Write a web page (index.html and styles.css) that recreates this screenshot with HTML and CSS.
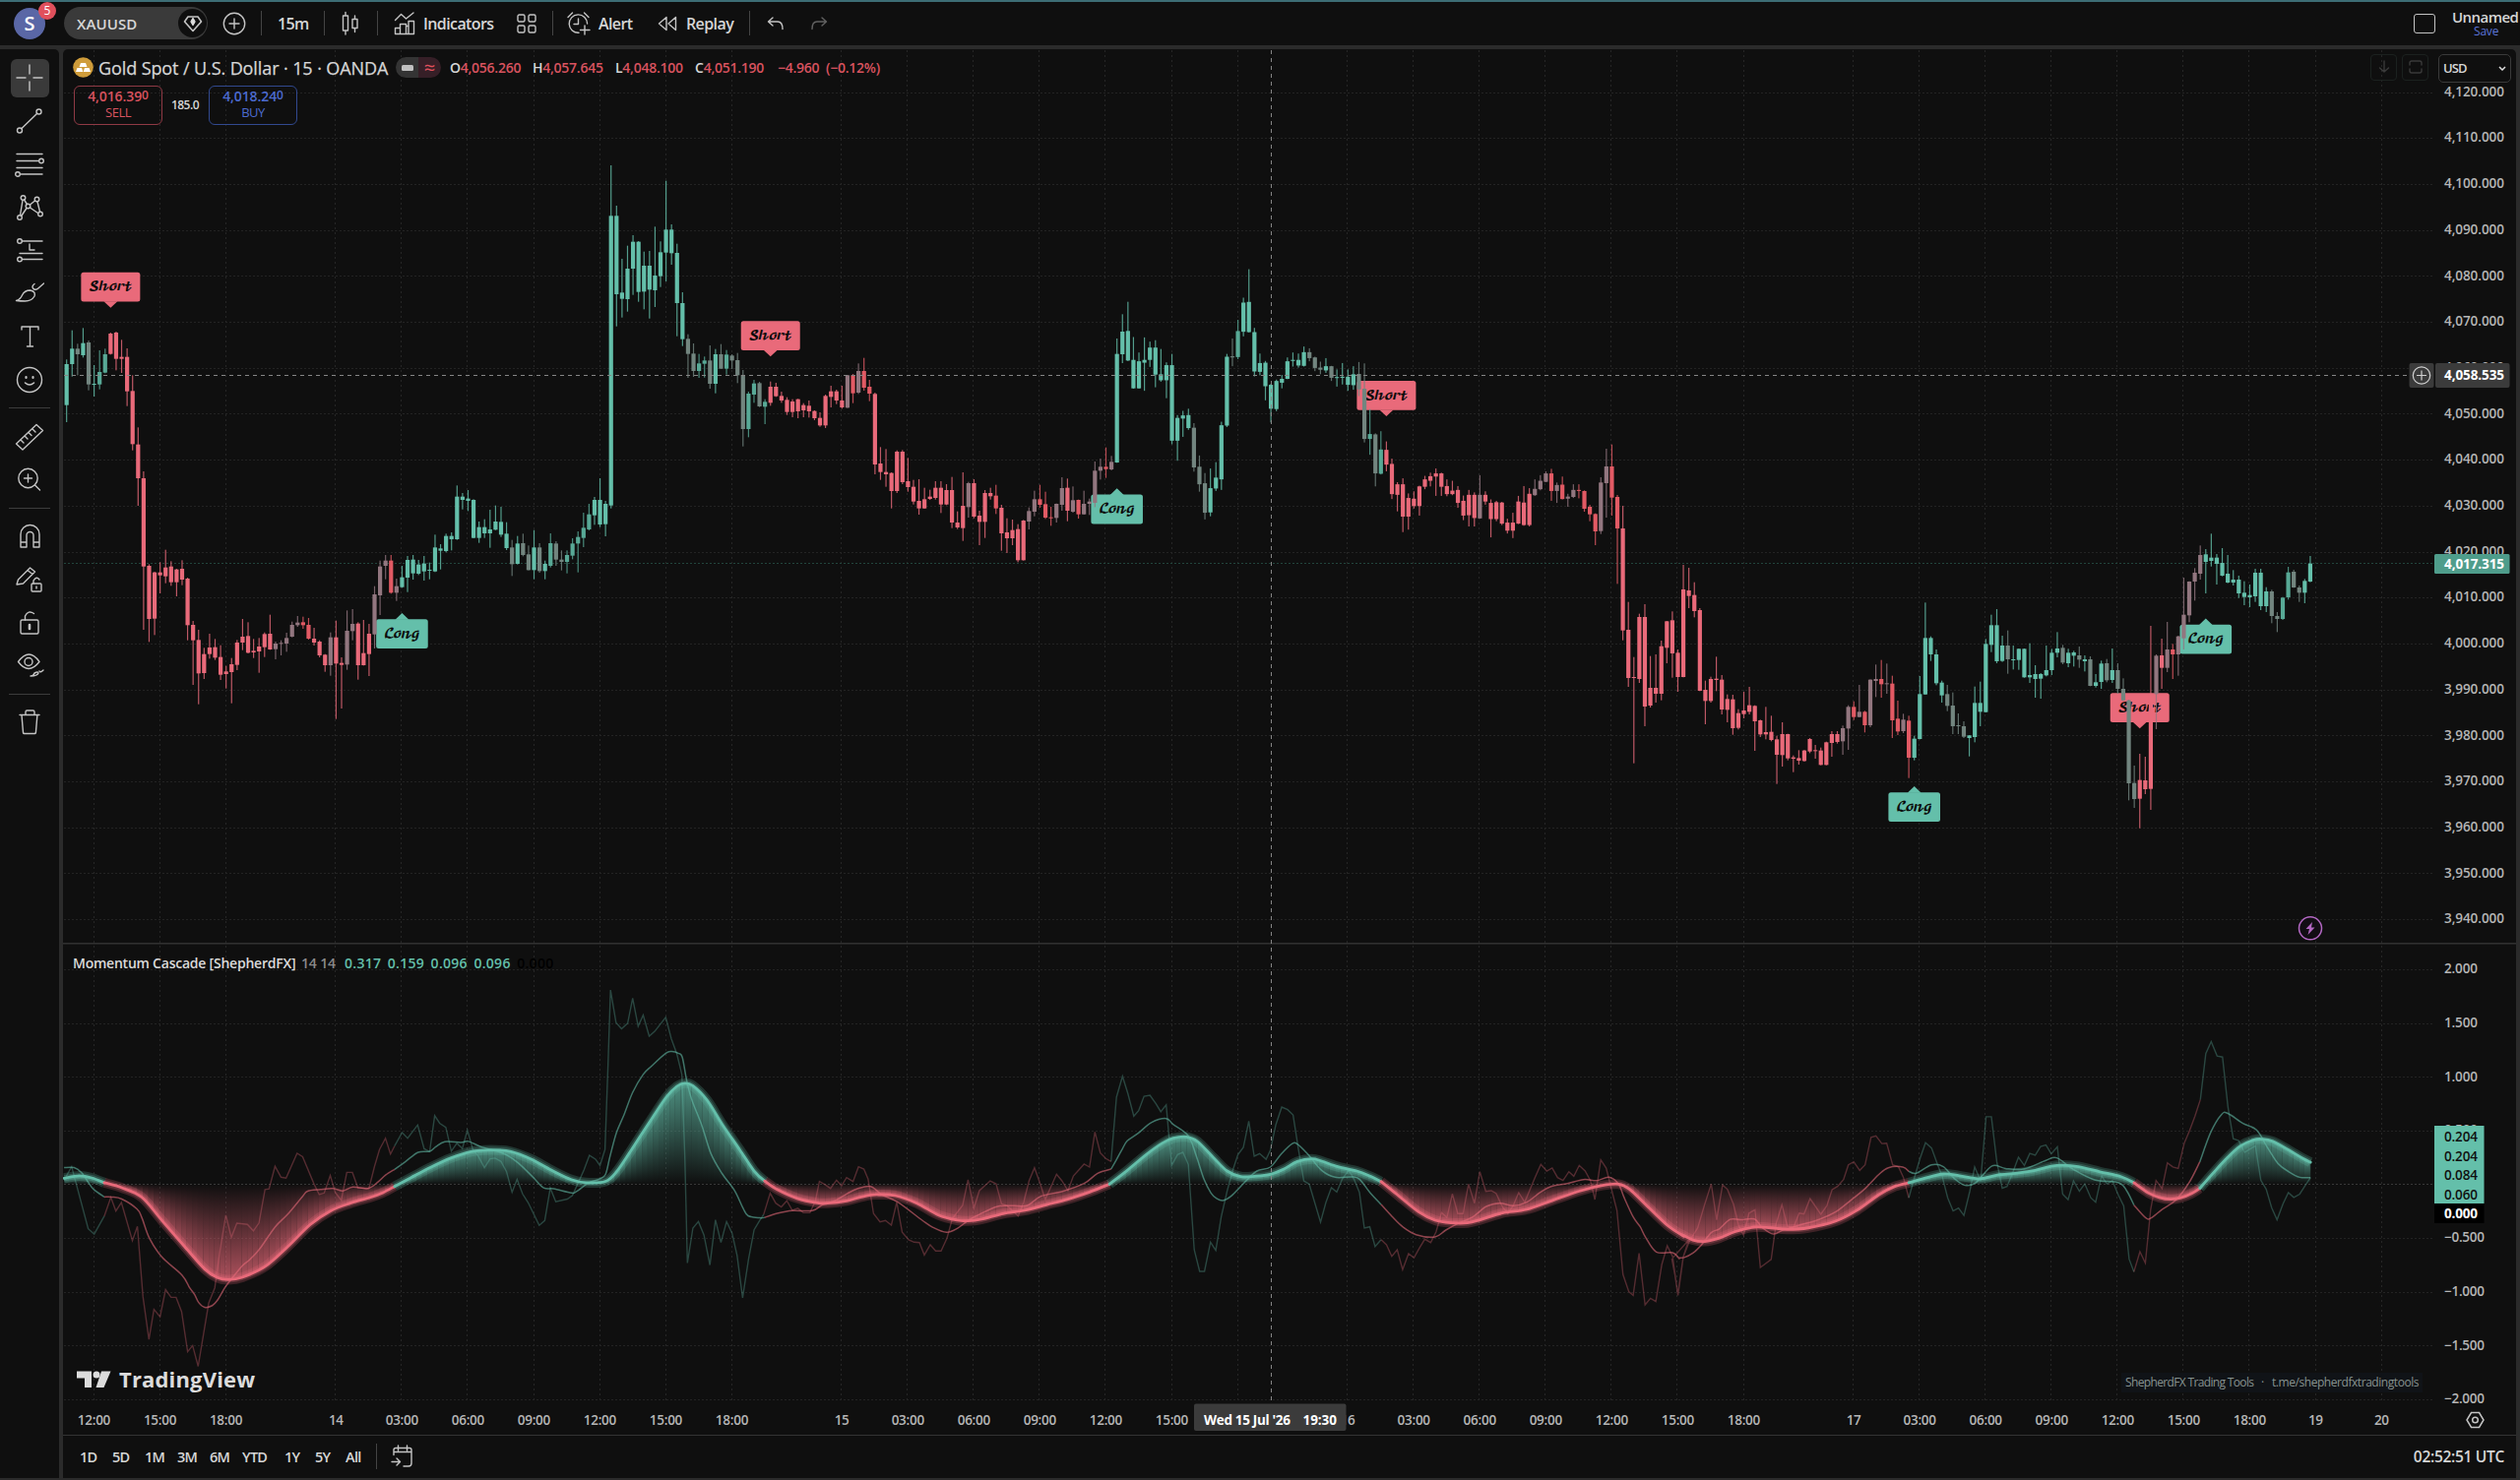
FILE: index.html
```html
<!DOCTYPE html>
<html lang="en">
<head>
<meta charset="utf-8">
<title>XAUUSD</title>
<link rel="stylesheet" href="styles.css">
</head>
<body>
<div class="app">
  <header class="topbar">
    <div class="avatar">S<span class="badge">5</span></div>
    <div class="symbol"><span>XAUUSD</span>
      <i class="symbol-dot"><svg class="ic" width="20" height="18" viewBox="0 0 20 18"><path d="M5 2h10l3.500 5L10 16.500 1.500 7z" stroke-width="1.600"/><path d="M10 3.500l2 3.500-2 3.500-2-3.500z" fill="#ddd" stroke="#ddd"/></svg></i>
    </div>
    <svg class="ic add" width="24" height="24" viewBox="0 0 24 24"><circle cx="12" cy="12" r="10.700"/><path d="M12 7v10M7 12h10"/></svg>
    <b class="sep s1"></b>
    <span class="lbl t15">15m</span>
    <b class="sep s2"></b>
    <svg class="ic candle" width="18" height="26" viewBox="0 0 18 26"><path d="M1.500 5h5v15h-5zM4 1.500V5M4 20v4M11 8.500h5v9h-5zM13.500 5v3.500M13.500 17.500v4"/></svg>
    <b class="sep s3"></b>
    <svg class="ic ind" width="22" height="24" viewBox="0 0 22 24"><path d="M1.500 8.500l6-6 5 4.500 7.500-6M1.500 22.500v-6h5v6M6.500 22.500v-10h6v10M12.500 22.500v-8h2.500v-5h5.500v13zM1.500 22.500h19M15 14.500v8"/></svg>
    <span class="lbl tind">Indicators</span>
    <svg class="ic grid4" width="20" height="20" viewBox="0 0 20 20"><rect x="1" y="1" width="7" height="7" rx="1.500"/><rect x="12" y="1" width="7" height="7" rx="1.500"/><rect x="1" y="12" width="7" height="7" rx="1.500"/><rect x="12" y="12" width="7" height="7" rx="1.500"/></svg>
    <b class="sep s4"></b>
    <svg class="ic alert" width="24" height="24" viewBox="0 0 24 24"><path d="M20.600 12A9.200 9.200 0 1 0 12 21.300M11.500 7v5.500H7M1 5.500L5.500 1M17.500 1L22 5.500M18 14v9M13.500 18.500h9.500"/></svg>
    <span class="lbl tal">Alert</span>
    <svg class="ic replay" width="20" height="16" viewBox="0 0 20 16"><path d="M9 1.500v13L1.500 8zM18.500 1.500v13L11 8z"/></svg>
    <span class="lbl trep">Replay</span>
    <b class="sep s5"></b>
    <svg class="ic undo" width="18" height="14" viewBox="0 0 18 14"><path d="M6 1L1.500 5 6 9M1.500 5H11q5 0 5 7.500"/></svg>
    <svg class="ic redo" width="18" height="14" viewBox="0 0 18 14"><path d="M12 1l4.500 4L12 9M16.500 5H7q-5 0-5 7.500"/></svg>
    <div class="layout-box"></div>
    <div class="layout-name"><span>Unnamed</span><em>Save</em></div>
  </header>

  <div class="main">
    <nav class="tools">
      <div class="tool on"><svg class="ic" width="30" height="30" viewBox="0 0 30 30"><path d="M15 2v9M15 19v9M2 15h9M19 15h9"/></svg></div>
      <div class="tool"><svg class="ic" width="30" height="30" viewBox="0 0 30 30"><circle cx="5" cy="24.500" r="2.500"/><circle cx="24.500" cy="5.500" r="2.500"/><path d="M7 22.500L22.500 7.500"/></svg></div>
      <div class="tool"><svg class="ic" width="30" height="30" viewBox="0 0 30 30"><path d="M2 4.500h26M2 11.500h22M2 18.500h26M6 25h22"/><circle cx="27" cy="11.500" r="2.300"/><circle cx="3" cy="25" r="2.300"/></svg></div>
      <div class="tool"><svg class="ic" width="30" height="30" viewBox="0 0 30 30"><circle cx="5" cy="25" r="2.300"/><circle cx="8.500" cy="5" r="2.300"/><circle cx="13.500" cy="13.500" r="2.300"/><circle cx="22.500" cy="6.500" r="2.300"/><circle cx="26" cy="21.500" r="2.300"/><path d="M5.500 22.500L8 7.500M9.500 7l3 4.500M7 23l5-7.500M15.500 12l5-4M15.500 15l8 5.500M23 9l2.500 10"/></svg></div>
      <div class="tool"><svg class="ic" width="30" height="30" viewBox="0 0 30 30"><circle cx="5" cy="6" r="2.300"/><path d="M7.500 6H28M15 9v6h5M5 18.500h23M7.500 24.500H28"/><circle cx="5" cy="24.500" r="2.300"/></svg></div>
      <div class="tool"><svg class="ic" width="30" height="30" viewBox="0 0 30 30"><path d="M1.500 22.500q4-1 6-5.500 2.500-5 8-5 6 1 4.500 6-3 5-9.500 5-5 0-9-.5zM20 5.500q-3 2-1.500 4.500 2.500 3 6.500-1l4.500-4"/></svg></div>
      <div class="tool"><svg class="ic" width="30" height="30" viewBox="0 0 30 30"><path d="M7 8V5h17v3M15.500 5v20M12.500 25h6"/></svg></div>
      <div class="tool"><svg class="ic" width="30" height="30" viewBox="0 0 30 30"><circle cx="15" cy="15" r="12.500"/><path d="M10.500 18q4.500 4 9 0" stroke-width="1.600"/><path d="M11.500 12v1M18.500 12v1" stroke-width="2.200"/></svg></div>
      <hr>
      <div class="tool"><svg class="ic" width="30" height="30" viewBox="0 0 30 30"><path d="M1.500 22L22 2.500l6.500 6L8 28zM6 18l3 3M10 14l3 3M14 10.500l3 3M18 7l3 3"/></svg></div>
      <div class="tool"><svg class="ic" width="30" height="30" viewBox="0 0 30 30"><circle cx="13.500" cy="14" r="9.700"/><path d="M20.500 21l5 5M13.500 10v8M9.500 14h8"/></svg></div>
      <hr>
      <div class="tool"><svg class="ic" width="30" height="30" viewBox="0 0 30 30"><path d="M6 26V13a9.500 9.500 0 0 1 19 0v13h-6V14a3.500 3.500 0 0 0-7 0v12zM6 21h6M19 21h6"/></svg></div>
      <div class="tool"><svg class="ic" width="30" height="30" viewBox="0 0 30 30"><path d="M2 20l1.500-5L15.500 3l5 4-12 12zM13 5.500l5 4"/><rect x="17" y="19" width="10" height="8" rx="1"/><path d="M19 19v-3q3-5 6-1M22 22v2"/></svg></div>
      <div class="tool"><svg class="ic" width="30" height="30" viewBox="0 0 30 30"><rect x="6" y="12" width="18" height="14" rx="1.500"/><path d="M10.500 12V8q3-6.500 9-2.500"/><path d="M15 17v4" stroke-width="2.600"/></svg></div>
      <div class="tool"><svg class="ic" width="30" height="30" viewBox="0 0 30 30"><path d="M3.500 10.500q11-15 21.500 0-11 14-21.500 0z"/><circle cx="14" cy="10.500" r="4"/><path d="M16 25q3 0 4-3 4-2 4 0-1 3-8 3zM25 20q1 2 4-1" /></svg></div>
      <hr>
      <div class="tool"><svg class="ic" width="30" height="30" viewBox="0 0 30 30"><path d="M5 7.500h20M11 7V4.500q0-1.500 1.500-1.500h6q1.500 0 1.500 1.500V7M7 7.500l1.500 18q.2 1 1.200 1h10.500q1 0 1.200-1l1.500-18"/></svg></div>
    </nav>

    <section class="chart">
      <div class="plot">
        <svg id="plot" width="2492" height="1408" viewBox="64 50 2492 1408"></svg>
        <div class="legend">
          <div class="row title-row">
            <svg width="21" height="21" viewBox="0 0 21 21"><circle cx="10.500" cy="10.500" r="10.300" fill="#cf9c3a"/><path d="M8 6h5l1.500 4h-8zM4.500 11h4.500l1.300 4H3zM12 11h4.500l1.500 4h-7.300z" fill="#fff"/></svg>
            <span class="name">Gold Spot / U.S. Dollar · 15 · OANDA</span>
            <span class="pill"><i><svg width="12" height="6" viewBox="0 0 12 6"><rect width="12" height="6" rx="1.500" fill="#c0c0c0"/></svg></i><i>≈</i></span>
            <span class="ohlc"><span>O<b>4,056.260</b></span><span>H<b>4,057.645</b></span><span class="l">L<b>4,048.100</b></span><span>C<b>4,051.190</b></span><span class="chg"><b>−4.960</b></span><span><b>(−0.12%)</b></span></span>
          </div>
          <div class="row deal">
            <div class="btn sell"><span>4,016.39<sup>0</sup></span><em>SELL</em></div>
            <span class="spread">185.0</span>
            <div class="btn buy"><span>4,018.24<sup>0</sup></span><em>BUY</em></div>
          </div>
        </div>
        <div class="corner">
          <span class="ghost"><svg class="ic" width="14" height="14" viewBox="0 0 14 14"><path d="M7 1v11M2.500 8L7 12l4.500-4"/></svg></span>
          <span class="ghost"><svg class="ic" width="14" height="14" viewBox="0 0 14 14"><path d="M1 5V3q0-2 2-2h8q2 0 2 2v2M1 9v2q0 2 2 2h8q2 0 2-2V9"/></svg></span>
          <span class="usd">USD<svg width="8" height="5" viewBox="0 0 8 5"><path d="M1 1l3 3 3-3" fill="none" stroke="#ddd" stroke-width="1.500"/></svg></span>
        </div>
      </div>
      <footer class="ranges">
        <span class="r">1D</span><span class="r">5D</span><span class="r">1M</span><span class="r">3M</span><span class="r">6M</span><span class="r ytd">YTD</span><span class="r y">1Y</span><span class="r y">5Y</span><span class="r all">All</span>
        <b class="rsep"></b>
        <svg class="ic" width="24" height="24" viewBox="0 0 24 24"><path d="M3 10.500V5.500q0-2 2-2h14q2 0 2 2V19q0 3-3 3h-5M3 7.500h18M7.500 1v5M16.500 1v5M1 17.500h8M6 14l3.500 3.500L6 21"/></svg>
        <span class="clock">02:52:51 UTC</span>
      </footer>
    </section>
  </div>
</div>
<script src="chart.js"></script>
</body>
</html>
```
FILE: styles.css
```css
* { box-sizing: border-box; }
body {
  margin: 0;
  background: #2b2b2b;
  color: #d6d6d6;
  font-family: "Open Sans", "Noto Sans", sans-serif;
  font-size: 14px;
}
.app { width: 2560px; height: 1504px; overflow: hidden; display: flex; flex-direction: column; border-top: 2.5px solid #3d6d75; padding-bottom: 2px; }
em, i { font-style: normal; }
.ic { fill: none; stroke: #c4c4c4; stroke-width: 1.4; stroke-linecap: round; stroke-linejoin: round; display: block; flex: none; }

.topbar { height: 43.5px; flex: none; background: #0f0f0f; display: flex; align-items: center; padding-left: 14px; }
.avatar { width: 32px; height: 32px; border-radius: 50%; background: #5a67a6; color: #fff; font-size: 20px; font-weight: 600; line-height: 31px; text-align: center; position: relative; flex: none; }
.badge { position: absolute; left: 25px; top: -6px; width: 18px; height: 18px; border-radius: 50%; background: #e0505c; font-size: 12px; line-height: 18px; font-weight: 400; }
.symbol { margin-left: 19px; width: 146px; height: 33px; border-radius: 17px; background: #3a3a3a; display: flex; align-items: center; justify-content: space-between; padding: 0 1px 0 13px; font-weight: 600; letter-spacing: .1px; flex: none; font-size: 15px; }
.symbol-dot { width: 29px; height: 29px; border-radius: 50%; background: #0f0f0f; display: flex; align-items: center; justify-content: center; }
.sep { width: 1px; height: 25px; background: #444; flex: none; }
.lbl { font-size: 16px; font-weight: 600; white-space: nowrap; flex: none; line-height: 20px; letter-spacing: -.6px; }
.add { margin-left: 15px; }
.s1 { margin-left: 15px; }
.t15 { margin-left: 16px; width: 30px; }
.s2 { margin-left: 17px; }
.candle { margin-left: 17px; }
.s3 { margin-left: 18px; }
.ind { margin-left: 16px; }
.tind { margin-left: 8px; width: 72px; }
.grid4 { margin-left: 23px; }
.s4 { margin-left: 16px; }
.alert { margin-left: 14px; }
.tal { margin-left: 8px; width: 36px; }
.replay { margin-left: 24px; }
.trep { margin-left: 9px; width: 49px; }
.s5 { margin-left: 15px; }
.undo { margin-left: 17px; }
.redo { margin-left: 26px; opacity: .45; }
.layout-box { margin-left: auto; width: 22px; height: 20px; border: 1.5px solid #c4c4c4; border-radius: 3px; flex: none; }
.layout-name { width: 69px; margin-left: 17px; display: flex; flex-direction: column; line-height: 16px; align-items: flex-start; flex: none; font-size: 15px; font-weight: 600; letter-spacing: -.55px; white-space: nowrap; }
.layout-name em { font-size: 12px; line-height: 14px; color: #5a74d8; font-weight: 400; margin-left: 22px; letter-spacing: -.2px; }

.main { flex: 1; min-height: 0; display: flex; padding-top: 4px; gap: 4px; padding-right: 4px; }
.tools { width: 60px; background: #0f0f0f; border-top-right-radius: 5px; display: flex; flex-direction: column; align-items: center; padding-top: 8px; flex: none; }
.tool { width: 39px; height: 43.75px; display: flex; align-items: center; justify-content: center; flex: none; }
.tool.on { height: 39px; margin: 2px 0 2.750px; background: #3a3a3a; border-radius: 6px; }
.tools hr { width: 42px; height: 1px; border: 0; background: #3c3c3c; margin: 6.6px 0; flex: none; }

.chart { flex: 1; display: flex; flex-direction: column; background: #0f0f0f; border-radius: 5px 5px 0 0; overflow: hidden; }
.plot { height: 1408px; flex: none; position: relative; }
.plot > svg { display: block; }
.legend { position: absolute; left: 10px; top: 8px; }
.row { display: flex; align-items: center; }
.title-row { height: 22px; gap: 5px; }
.name { font-size: 18px; line-height: 22px; width: 297px; white-space: nowrap; font-weight: 500; letter-spacing: -.1px; -webkit-text-stroke: .25px #d6d6d6; }
.pill { width: 46px; height: 21px; border-radius: 11px; overflow: hidden; display: flex; margin-right: 4px; }
.pill i { flex: 1; background: #343434; display: flex; align-items: center; justify-content: center; }
.pill i + i { background: #361f27; color: #e0505c; font-size: 20px; line-height: 20px; }
.ohlc { display: flex; font-size: 14px; font-weight: 600; letter-spacing: -.25px; }
.ohlc > span { width: 84px; white-space: nowrap; }
.ohlc > .l { width: 81px; }
.ohlc > .chg { width: 49px; }
.ohlc b { color: #d9535f; font-weight: 600; }
.deal { margin-top: 7px; }
.btn { width: 90px; height: 40px; border: 1.5px solid #8f3a45; border-radius: 6px; color: #d9535f; display: flex; flex-direction: column; align-items: center; line-height: 16.5px; padding-top: 2px; margin-left: 1px; font-weight: 600; letter-spacing: -.1px; }
.btn sup { font-size: 12px; line-height: 0; vertical-align: 2px; }
.btn em { font-size: 13px; letter-spacing: -.5px; font-weight: 500; }
.buy { border-color: #31498f; color: #4c6bd0; }
.spread { width: 46px; text-align: center; font-size: 12px; letter-spacing: -.5px; font-weight: 600; }
.corner { position: absolute; right: 5px; top: 5px; display: flex; gap: 5px; }
.ghost { width: 27px; height: 27px; border: 1px solid #1b211f; border-radius: 4px; display: flex; align-items: center; justify-content: center; }
.ghost .ic { stroke: #3a3a3a; }
.usd { width: 74px; height: 29px; margin-left: 5px; border: 1px solid #3a3a3a; border-radius: 5px; display: flex; align-items: center; justify-content: space-between; padding: 0 4px; font-size: 13px; font-weight: 600; letter-spacing: -.9px; background: #0f0f0f; }

.ranges { flex: 1; border-top: 1px solid #333; display: flex; align-items: center; padding: 0 12px 0 17px; font-size: 14.500px; font-weight: 600; letter-spacing: -.7px; }
.r { width: 33px; white-space: nowrap; }
.ranges .ytd { width: 43px; }
.ranges .y { width: 31px; }
.ranges .all { width: 31px; }
.rsep { width: 1px; height: 26px; background: #444; margin-right: 14px; }
.clock { margin-left: auto; font-size: 15.5px; letter-spacing: -.3px; }

.axis { fill: #b6b6b6; font-size: 13.5px; font-weight: 600; }
.strong { fill: #fff; font-weight: 700; }
.dark { fill: #0f0f0f; }
.tag { font-family: "DejaVu Math TeX Gyre", "Liberation Serif", serif; font-size: 12.5px; fill: #0b0b0b; }
.brand { font-size: 22px; font-weight: 700; fill: #dcdcdc; }
```
FILE: chart.js
```js
const NS = 'http://www.w3.org/2000/svg';
const root = document.getElementById('plot');
const X0 = 67.67, STEP = 5.5864;
const X = i => X0 + STEP * i;
const GREEN = '#64bfaa', RED = '#e96a7a';

function el(name, attrs, parent, text) {
  const n = document.createElementNS(NS, name);
  for (const k in attrs) n.setAttribute(k, attrs[k]);
  if (text !== undefined) n.textContent = text;
  (parent || root).appendChild(n);
  return n;
}
function label(x, y, text, width, cls, anchor, extra) {
  const a = Object.assign({ x, y, class: cls || 'axis', 'text-anchor': anchor || 'start' }, extra || {});
  if (width) a.textLength = width;
  return el('text', a, root, text);
}

// ---- grid ----
const ticks = [[5, '12:00'], [17, '15:00'], [29, '18:00']];
[[49, '14'], [141, '15'], [233, '16'], [325, '17']].forEach(([base, day]) => {
  ticks.push([base, day]);
  ['03:00', '06:00', '09:00', '12:00', '15:00', '18:00'].forEach((t, k) => ticks.push([base + 12 * (k + 1), t]));
});
ticks.push([409, '19'], [421, '20']);
ticks.forEach(([i, t]) => {
  const x = Math.round(X(i)) - 0.5;
  el('path', { d: `M${x} 51V1426`, stroke: '#262626', 'stroke-dasharray': '2 3' });
  label(X(i), 1447.500, t, t.length > 2 ? 33.500 : 15, t === '20' ? 'axis bold' : 'axis', 'middle');
});
const priceY = p => 93.6 + (4120 - p) * 4.6695;
for (let p = 4120; p >= 3940; p -= 10) {
  const y = priceY(p);
  el('path', { d: `M65 ${Math.round(y) + 0.5}H2473`, stroke: '#232323', 'stroke-dasharray': '2 2' });
  label(2483, y + 4.2, p.toLocaleString('en-US') + '.000', 61);
}
const oscY = v => 1203.3 - v * 109.2;
for (let v = 2; v >= -2; v -= 0.5) {
  el('path', { d: `M65 ${Math.round(oscY(v)) + 0.5}H2473`, stroke: v ? '#232323' : '#383838', 'stroke-dasharray': '2 2' });
  if (v) label(2483, oscY(v) + 4.500, v.toFixed(3).replace('-', '−'), v < 0 ? 41 : 34);
}
el('path', { d: 'M65 572.500H2473', stroke: '#22443c', 'stroke-dasharray': '2 2' });
el('rect', { x: 64, y: 958, width: 2492, height: 1.600, fill: '#303030' });

// ---- signal tags ----
const tags = [
  [8, 276.7, 0], [128, 326.3, 0], [240, 387, 0], [377, 704.3, 0],
  [61, 629.3, 1], [191, 502.6, 1], [336, 805.3, 1], [389, 634.7, 1]
];
tags.forEach(([i, y, up]) => {
  const c = X(i), w = up ? 52.600 : 60, f = up ? GREEN : RED;
  el('rect', { x: c - w / 2, y, width: w, height: 29.800, rx: 2.500, fill: f });
  el('path', { d: up ? `M${c - 7} ${y + 0.500}L${c} ${y - 6.300}L${c + 7} ${y + 0.500}z` : `M${c - 7} ${y + 29.500}L${c} ${y + 36}L${c + 7} ${y + 29.500}z`, fill: f });
  label(c, y + 18.500, up ? '𝓛𝓸𝓷𝓰' : '𝓢𝓱𝓸𝓻𝓽', up ? 37 : 45, 'tag', 'middle');
});

// ---- candles: high, body top, body bottom, low + tone, per block of bars ----
const blocks = [
[0, 240, 3, `376 390 515 567g 287 343 390 428g 328 343 360 424s 280 326 363 370g 318 324 452 470s 393 450 452 489g 348 414 452 467d 343 360 416 418d 294 297 359 361r 291 294 374 409r 316 368 374 417r 342 368 473 518r 424 472 634 653r 583 635 738 822r 717 738 1007 1200r 1000 1005 1167 1237r 1023 1025 1166 1216r 994 1025 1034 1089r 956 1010 1037 1058r 991 1007 1055 1066r 1014 1016 1055 1098r 988 1014 1047 1064r 1041 1044 1186 1232r 1173 1185 1232 1368r 1200 1231 1333 1427r 1255 1274 1332 1350r 1212 1254 1274 1288r 1228 1253 1285 1292r 1247 1283 1337 1353r 1310 1327 1335 1379r 1286 1305 1329 1424r 1231 1239 1307 1323r 1167 1221 1239 1262r 1177 1219 1270 1272r 1228 1264 1269 1286r 1225 1251 1266 1331r 1208 1213 1253 1283r 1154 1212 1260 1261r 1236 1242 1259 1290m 1232 1240 1242 1278m 1209 1225 1242 1267m 1175 1185 1221 1223m 1158 1178 1186 1191m 1160 1177 1186 1197o 1164 1185 1227 1230o 1194 1227 1239 1248r 1232 1236 1278 1284r 1274 1276 1308 1328r 1208 1223 1308 1340m 1172 1223 1303 1472r 1284 1301 1307 1440r 1141 1203 1306 1322m 1137 1182 1204 1232m 1177 1181 1308 1352r 1170 1271 1308 1309r 1182 1212 1274 1341r 1067 1092 1214 1257m 989 1007 1095 1155m 972 989 1005 1046m 972 989 1087 1090o 1044 1067 1087 1112m 1005 1040 1070 1072g 975 987 1041 1085g 972 986 1028 1047g 987 1001 1029 1033g 975 998 1022 1050g 995 1017 1020 1046g 910 949 1022 1024g 939 952 959 1016g 907 914 960 964g 903 914 924 958g 760 794 924 926g 783 794 804 833g 774 800 807 838g 802 804 920 921g 870 887 920 935g 863 887 906 920g 834 894 906 950g 821 870 895 896g 825 871 910 917g 872 907 951 957g 926 949 1000 1036s 914 937 999 1001g 907 936 972 976s 943 970 1018 1019s 896 949 1018 1046g 936 949 1021 1026s 989 999 1021 1046g 906 936 1005 1010d 930 937 986 1005s 958 986 993 1019s 958 972 993 1028d 921 937 974 985d 900 917 937 1025d 843 889 920 948d 816 848 894 897d 795 804 851 880g 738 804 879 887g 807 816 878 915g`],
[99, 140, 3, `84 238 1121 1130g 207 238 477 575g 369 472 491 548g 329 399 492 530g 297 317 399 479g 315 317 470 500g 347 390 469 523g 345 390 463 551g 271 420 465 516g 316 349 422 455g 131 280 350 438g 264 280 352 387g 323 351 504 605g 471 504 614 635g 599 613 659 732s 627 658 711 729s 659 688 711 732d 667 679 689 731d 633 679 750 765s 644 660 750 779g 629 660 704 705s 647 661 704 722d 660 664 679 705s 656 678 724 748s 708 723 888 941s 774 780 888 913d 738 749 783 808d 744 748 819 821s 797 805 820 873d 743 759 808 817r 747 759 788 790r 774 787 801 808r 791 799 836 845r 797 804 836 852r 796 797 834 855r 809 815 831 852r 801 817 834 853r 831 833 855 861r 837 854 877 881r 783 787 877 885r 756 773 790 822r 768 773 801 812r 756 801 822 826r 723 724 823 824m 720 724 779 809o 688 711 777 781m 671 711 762 771o 738 759 780 803o 777 781 996 1026r 943 993 1019 1043r 949 1019 1026 1064r 1020 1022 1077 1130r 953 957 1077 1083r 952 957 1050 1056r 976 1047 1065 1079r 1043 1064 1109 1118r 1041 1107 1130 1149r 1067 1102 1130 1131r 1073 1094 1101 1104r 1047 1067 1098 1103r 1047 1067 1118 1144r 1056 1074 1118 1120r 1034 1074 1173 1190r 1139 1173 1188 1193r 1020 1122 1190 1229r 1049 1053 1126 1158m 1041 1053 1155 1160r 1137 1152 1171 1242r 1074 1083 1171 1220r 1067 1083 1093 1103r 1058 1091 1130 1147o 1119 1128 1206 1259r 1160 1203 1221 1266r 1164 1196 1221 1242r 1178 1193 1288 1294r 1165 1167 1288 1289r 1127 1138 1170 1194m 1076 1102 1140 1154m 1058 1102 1119 1128o 1079 1117 1158 1162o 1125 1157 1159 1183o 1115 1116 1159 1173m 1035 1068 1119 1137m 1039 1067 1137 1169r 1063 1105 1140 1143m 1103 1104 1148 1161o 1076 1116 1148 1149m 1100 1109 1116 1150m 987 1015 1113 1126m 978 1003 1015 1042m 944 1003 1010 1037o 970 988 1011 1014m 612 659 990 991g 538 591 660 687g 500 589 679 681g`],
[194, 240, 2.8, `287 352 433 434g 331 356 433 434g 288 352 360 440g 300 317 352 372g 296 317 394 430g 321 393 410 414g 359 367 410 461g 335 367 582 592g 509 517 582 639g 497 510 519 571g 491 509 546 551g 532 545 658 670s 624 656 706 727s 674 703 787 806s 661 717 786 797g 643 687 718 725g 528 538 692 722g 335 343 539 543g 291 342 345 370s 238 270 344 350d 175 189 272 285g 94 187 273 274g 261 273 385 399g 334 361 386 396g 355 360 427 467g 420 423 491 530g 408 412 492 498g 395 406 417 433g 345 356 406 407g 331 352 355 371g 334 352 368 374g 314 330 369 371g 319 330 347 356s 343 345 375 384s 357 374 380 393s 347 370 382 389g 369 370 403 412s 379 401 403 428g 361 400 403 422g 379 400 423 440g 370 393 424 437g 358 392 436 455s 362 434 577 587s 492 563 577 622d 561 564 675 712s 555 607 676 678d 584 608 650 669r 633 648 734 748r 700 706 736 783r 689 706 798 842r 732 745 798 835r 726 747 768 775r 710 712 768 795r 682 692 713 720r 673 683 696 712r 661 675 684 739r 673 675 713 739r 692 711 734 740r 696 724 734 737r 711 722 759 773r 738 753 795 808r 722 736 794 826r 729 736 802 826r 680 736 803 804m 726 736 755 764r 749 759 805 857r 753 757 805 811r 756 758 818 822r 804 815 838 846r 787 815 838 859r 739 755 818 819r 711 758 822 824r 717 733 822 826r 692 719 737 739m 680 696 720 723m 669 675 699 700m 662 675 725 753o 701 708 725 759m 684 707 748 749o 733 741 747 770m 706 722 742 745m 706 722 724 746o`],
[276, 440, 3, `175 177 231 240o 219 225 248 269o 245 247 300 342o 135 151 299 308m 48 102 153 258m 35 102 197 252o 189 195 291 460o 222 291 602 632r 515 600 747 774r 683 744 747 1007r 551 561 750 762r 522 561 834 894r 680 777 831 837r 675 777 795 822r 633 650 795 815r 573 574 655 702r 544 571 672 746r 660 670 744 789r 402 477 744 745r 411 480 497 534r 455 494 543 562r 534 540 786 787r 755 783 817 888r 743 750 817 822r 682 749 753 787r 738 752 843 858r 797 811 844 882r 798 812 900 920r 842 854 899 904r 789 846 857 870r 774 830 850 858r 830 832 879 969r 874 876 919 927r 835 912 919 934r 862 911 936 940r 923 934 981 1070r 882 918 982 1017r 917 918 992 998r 983 989 993 1034r 967 991 999 1011r 966 968 1000 1002r 930 933 971 976r 951 967 970 993r 959 968 1012 1013r 941 943 1012 1013r 909 918 945 987r 909 918 942 947r 892 900 940 981m 830 835 901 966m 818 835 866 875o 768 850 866 867m 847 850 891 913o 751 752 891 897m 706 750 756 805m 692 750 766 807o 703 763 765 795m 740 764 876 930o 816 871 910 921o 856 874 909 915m 862 877 990 1052o 923 932 990 998g 741 796 933 934g 517 625 797 798g 620 625 675 695g 660 675 763 769g 755 761 800 822g 768 796 832 848s 791 831 894 918s 855 891 894 918s 879 894 926 930s 921 922 930 986g 773 823 927 943g 758 823 850 894g 628 643 851 852g 554 586 646 668g 537 586 696 702g 618 648 695 698g 602 648 690 734s 648 690 692 721g 657 658 692 722g 657 658 745 746g 641 738 745 762g 708 735 750 807g 732 735 749 810g 648 723 739 742g 658 670 723 738g 607 657 670 684g 646 655 700 705s 658 670 702 714g 664 669 679 712g 651 678 691 716s 678 690 696 727g 681 690 771 772s 735 760 771 776g 694 703 759 780g 689 702 754 760s 657 723 753 762g 702 723 780 795s 748 780 815 817s 813 815 1068 1120s 1014 1067 1116 1143s 978 1058 1115 1205r 987 1059 1086 1101r 588 795 1085 1149r 675 679 796 903m 627 678 716 780r 576 660 716 729m 643 660 675 750o 618 620 675 740m 441 554 626 660m 452 453 556 577m 412 426 453 511m 343 372 429 447m 354 370 393 489g 307 380 390 407g 369 380 399 462g 351 396 435 437g 372 429 456 458g 418 447 456 465g 435 447 489 503g 452 487 500 525g 462 494 501 531g 414 426 498 515g 414 426 528 540g 470 483 528 546g 478 483 558 580s 546 558 567 607s 500 502 567 570d 408 425 501 508d 417 423 471 472s 465 471 487 515s 445 451 487 519g 375 398 453 455g`]
];
const tones = { g: GREEN, d: '#58a996', s: '#72857f', r: RED, m: '#92767f', o: '#e25a64' };
blocks.forEach(([start, top, k, rows]) => {
  rows.match(/\d+ \d+ \d+ \d+\w/g).forEach((row, j) => {
    const v = row.slice(0, -1).split(' ').map(n => top + n / k), fill = tones[row.slice(-1)];
    const x = X(start + j);
    el('rect', { x: x - 0.6, y: v[0], width: 1.2, height: v[3] - v[0], fill, opacity: 0.8 });
    el('rect', { x: x - 2.1, y: v[1] , width: 4.2, height: Math.max(v[2] - v[1], 1), fill });
  });
});

// ---- oscillator: three series, stored per block with a leading tone switch ----
const frames = [[60, 1.96, 960, 2.882], [860, 1.8233, 1040, 3], [1700, 1.8233, 920, 2.685]];
function series(parts) {
  const runs = []; let cur = null;
  parts.forEach((txt, f) => {
    const [ox, kx, oy, ky] = frames[f];
    txt.trim().split(/\s+/).forEach(tok => {
      if (tok === 'G' || tok === 'R') {
        const last = cur && cur.pts[cur.pts.length - 1];
        cur = { c: tok === 'G' ? GREEN : RED, pts: last ? [last] : [] };
        runs.push(cur);
      } else {
        const [a, b] = tok.split(',').map(Number);
        cur.pts.push([ox + a / kx, oy + b / ky]);
      }
    });
  });
  return runs;
}
const raw = series([
`G 10,690 25,650 58,832 70,848 90,795 R 103,740 113,780 124,755 146,867 156,825 167,1030 179,1156 189,1068 201,1090 212,1010 223,1033 233,1033 244,1075 256,1192 266,1174 277,1235 298,1050 310,1005 320,900 332,792 343,857 354,816 375,819 387,838 398,815 410,717 418,715 430,649 442,681 452,684 474,611 485,621 508,702 518,732 528,727 540,676 550,725 562,749 573,667 584,667 595,712 617,714 628,650 638,600 650,567 660,613 668,590 G 683,550 694,567 714,528 727,598 738,606 748,501 758,523 770,535 781,605 792,582 803,597 813,543 824,600 835,620 847,653 858,627 868,625 880,635 891,665 902,725 912,687 923,730 934,755 956,822 967,808 978,713 989,753 1012,745 1022,735 1033,700 1045,660 1056,617 1068,628 1077,647 1087,600 1093,350 1098,133 1109,228 1120,246 1132,230 1142,157 1153,239 1163,206 1175,268 1186,254 1208,213 1219,275 1230,320 1240,380 1246,620 1251,932 1262,830 1273,811 1284,850 1296,938 1307,806 1318,872 1329,811 1340,845 1350,910 1361,1034 1373,920 1384,835 1395,808 1403,790 R 1416,728 1427,757 1438,768 1449,750 1460,778 1471,772 1482,785 1495,785 1506,750 1514,693 1525,703 1536,714 1548,690 1558,706`,
`0,470 12,482 22,437 32,444 40,475 50,580 62,605 72,601 83,615 93,545 103,637 115,660 125,667 135,668 144,706 155,675 165,694 175,694 186,655 196,595 215,555 225,477 236,563 246,510 256,495 266,480 277,489 287,550 297,555 318,587 328,545 338,480 348,440 358,485 368,536 378,500 389,460 399,480 410,510 420,465 440,429 450,438 460,331 470,395 480,412 490,421 G 500,225 511,161 521,213 532,283 541,266 551,222 562,219 573,245 582,269 592,248 597,340 602,433 613,400 623,393 633,430 644,690 654,756 663,756 674,667 684,692 694,590 705,510 715,450 725,400 735,378 745,298 755,405 765,397 777,414 785,387 795,310 806,255 817,263 827,279 837,385 847,480 857,490 878,606 888,545 898,501 908,514 918,475 930,447 940,475 950,515 959,624 969,620 979,680 990,659 R 1000,675 1010,710 1020,690 1030,751 1041,702 1051,715 1061,685 1071,658 1082,668 1092,635 1102,577 1112,592 1122,520 1132,580 1142,580 1152,490 1163,548 1173,452 1184,512 1194,510 1203,518 1215,560 1225,580 1235,555 1245,516 1256,545 1265,510 1275,470 1286,430 1297,450 1307,441 1317,470 1327,479 1338,452 1347,466 1357,433 1368,450 1378,480 1386,537 1397,416 1407,441 1416,500 1427,570 1438,765 1449,818 1457,829 1468,701 1479,858 1489,838 1499,848 1510,735 1520,678 1530,710 1540,829 1550,710 1560,660`,
`-3,965 3,1010 8,1062 18,960 30,915 45,880 57,820 70,760 80,858 91,763 100,775 111,815 121,875 130,900 140,840 151,831 161,988 181,966 190,870 201,817 211,875 222,880 233,840 242,842 253,800 273,843 284,820 294,776 304,767 315,748 324,708 334,700 345,723 355,708 366,633 375,629 386,650 395,649 406,708 417,714 426,742 436,798 G 446,745 457,690 467,648 478,662 490,710 498,740 508,798 518,834 528,826 538,846 549,780 558,714 569,752 579,577 589,577 599,700 609,772 618,767 629,727 639,687 650,710 660,677 670,682 680,658 690,654 700,678 711,659 721,788 731,803 741,752 752,780 762,760 773,798 782,810 793,738 803,760 813,751 824,790 834,820 844,965 853,1000 R 864,945 874,976 884,830 894,751 905,773 915,703 925,714 935,718 946,650 956,615 966,575 976,530 G 986,405 996,372 1007,411 1017,414 1027,550 1037,637 1047,642 1058,674 1068,665 1078,656 1088,750 1098,775 1108,825 1118,858 1129,815 1139,784 1149,797 1160,788 1170,765 1180,743`]);
const mid = series([
`G 10,653 30,653 45,668 60,700 70,718 90,739 R 105,739 125,745 155,774 165,800 180,860 205,915 245,968 260,1005 270,1025 278,1048 290,1062 305,1057 315,1042 330,1005 340,985 365,940 380,922 400,890 430,827 455,790 485,737 495,722 520,717 545,714 565,721 585,710 615,714 635,695 650,675 668,658 G 690,635 715,608 738,605 750,592 768,577 800,579 815,576 840,592 870,604 890,615 915,640 945,683 965,712 985,715 1020,727 1030,723 1055,697 1075,687 1088,673 1097,620 1110,550 1125,498 1142,433 1163,380 1180,355 1208,318 1220,313 1233,318 1241,330 1250,400 1260,455 1280,530 1298,612 1320,670 1345,720 1362,772 1372,794 1395,800 1405,799 R 1430,787 1460,779 1500,779 1520,762 1545,750`,
`0,520 20,504 45,497 65,522 95,545 140,600 160,622 185,637 205,625 225,601 245,583 280,558 310,556 335,555 360,527 400,512 440,488 465,457 490,444 G 500,415 510,385 520,358 540,335 565,302 592,290 605,308 633,343 648,405 662,475 675,517 685,533 697,540 712,527 740,480 760,450 785,438 805,398 825,367 835,368 855,400 880,448 905,469 935,468 950,475 970,517 990,552 R 1010,588 1030,620 1055,644 1090,651 1110,630 1135,608 1160,590 1185,558 1210,548 1235,556 1260,545 1285,515 1305,497 1335,488 1365,476 1390,479 1412,469 1430,490 1440,530 1457,590 1470,620 1480,652 1500,697 1530,699 1542,716`,
`10,962 20,961 36,949 50,930 70,893 85,883 105,857 125,858 150,856 165,880 185,897 205,885 235,872 270,857 300,837 330,803 355,773 380,735 398,716 425,714 436,726 G 450,731 478,708 500,713 520,745 540,764 560,757 590,711 615,718 650,719 690,696 710,689 740,720 780,749 825,757 840,780 853,818 R 875,853 885,853 905,830 930,805 955,757 975,700 G 995,620 1015,571 1027,568 1055,595 1080,613 1100,660 1120,705 1140,727 1160,742 1180,743`]);
const main = series([
`G 10,684 40,677 65,683 90,697 R 125,712 165,740 205,808 250,884 290,950 315,975 338,981 365,974 410,943 455,885 500,820 540,780 580,757 620,740 645,726 668,708 G 700,683 740,652 780,625 820,606 860,601 900,606 940,628 980,660 1020,688 1050,697 1088,693 1110,665 1140,600 1180,510 1210,445 1230,415 1245,406 1262,413 1290,455 1320,525 1355,600 1385,665 1405,692 R 1430,717 1470,743 1510,756 1530,757`,
`0,541 25,530 45,523 60,522 90,525 130,548 170,584 205,600 225,602 250,597 290,580 330,570 370,553 410,536 450,514 487,490 G 520,448 555,400 585,365 605,350 630,346 650,360 680,410 705,450 730,467 755,466 785,460 810,444 835,421 862,413 880,420 910,437 945,450 970,466 990,482 R 1020,522 1060,575 1090,600 1120,608 1150,608 1175,598 1215,578 1260,567 1310,538 1360,510 1400,494 1430,490 1450,505 1480,552 1520,615 1550,648`,
`15,898 36,913 58,917 85,908 115,890 150,878 180,880 210,884 250,880 300,862 340,832 380,790 410,767 436,757 G 465,745 500,733 530,738 568,746 600,736 640,730 670,723 700,712 720,709 750,713 790,727 830,741 853,757 R 880,785 900,797 920,802 940,798 960,786 975,772 G 1000,730 1025,690 1050,657 1075,640 1090,638 1110,644 1140,668 1165,690 1180,701`]);

const linear = p => 'M' + p.map(a => a.map(n => n.toFixed(1)).join(' ')).join('L');
function curve(p) {
  let d = `M${p[0]}`;
  for (let i = 0; i < p.length - 1; i++) {
    const a = p[i - 1] || p[i], b = p[i], c = p[i + 1], e = p[i + 2] || c;
    d += `C${b[0] + (c[0] - a[0]) / 6} ${b[1] + (c[1] - a[1]) / 6} ${c[0] - (e[0] - b[0]) / 6} ${c[1] - (e[1] - b[1]) / 6} ${c[0]} ${c[1]}`;
  }
  return d;
}
const defs = el('defs', {});
[['gu', GREEN, 0], ['gd', GREEN, 1], ['ru', RED, 0], ['rd', RED, 1]].forEach(([id, c, flip]) => {
  const g = el('linearGradient', { id, x1: 0, x2: 0, y1: flip, y2: 1 - flip }, defs);
  el('stop', { offset: 0, 'stop-color': c, 'stop-opacity': 0.72 }, g);
  el('stop', { offset: 1, 'stop-color': c, 'stop-opacity': 0 }, g);
});
const zero = 1203.3;
main.forEach(run => {
  const path = el('path', { d: curve(run.pts), fill: 'none' });
  const len = path.getTotalLength(), n = Math.ceil(len / 2), samples = [];
  for (let i = 0; i <= n; i++) { const q = path.getPointAtLength(len * i / n); samples.push([q.x, q.y]); }
  path.remove();
  const at = x => {
    for (let i = 1; i < samples.length; i++) if (samples[i][0] >= x) {
      const [a, b] = [samples[i - 1], samples[i]];
      return a[1] + (b[1] - a[1]) * (x - a[0]) / ((b[0] - a[0]) || 1);
    }
    return samples[samples.length - 1][1];
  };
  const xa = run.pts[0][0], xb = run.pts[run.pts.length - 1][0];
  for (let x = xa; x < xb - 0.1; x += STEP) {
    const x2 = Math.min(x + STEP, xb), y1 = at(x), y2 = at(x2);
    const id = (run.c === GREEN ? 'g' : 'r') + ((y1 + y2) / 2 < zero ? 'u' : 'd');
    el('path', { d: `M${x} ${zero}L${x} ${y1}L${x2} ${y2}L${x2} ${zero}z`, fill: `url(#${id})` });
  }
});
raw.forEach(r => el('path', { d: linear(r.pts), fill: 'none', stroke: r.c, 'stroke-width': 1.4, opacity: 0.32 }));
mid.forEach(r => el('path', { d: curve(r.pts), fill: 'none', stroke: r.c, 'stroke-width': 1.5, opacity: 0.58 }));
main.forEach(r => {
  const d = curve(r.pts);
  [[10, 0.22], [6, 0.25], [2.8, 1]].forEach(([w, o]) => el('path', { d, fill: 'none', stroke: r.c, 'stroke-width': w, opacity: o, 'stroke-linecap': w < 3 ? 'round' : 'butt' }));
});

// ---- oscillator legend and branding ----
label(74, 983.500, 'Momentum Cascade [ShepherdFX]', 226.500, 'axis', 'start', { style: 'fill:#dadada;font-size:14px' });
label(306, 983.500, '14 14', 35, 'axis', 'start', { style: 'fill:#8a8a8a;font-size:14px' });
['0.317', '0.159', '0.096', '0.096', '0.000'].forEach((t, k) =>
  label(350 + k * 43.8, 983.500, t, 37, 'axis', 'start', { style: `fill:${k < 4 ? GREEN : '#000'};font-size:14px` }));
el('path', { d: 'M78 1393.500H93V1410H86V1400.500H78zM103 1393.500H112.500L105.500 1410H97.500z', fill: '#dcdcdc' });
el('circle', { cx: 98, cy: 1397, r: 3.500, fill: '#dcdcdc' });
label(121, 1410, 'TradingView', 138, 'brand');
el('rect', { x: 2155, y: 1395, width: 306, height: 20, fill: '#101317' });
const note = { style: 'fill:#87928f;font-size:12px;font-weight:400' };
label(2159, 1409, 'ShepherdFX Trading Tools', 131, 'axis', 'start', note);
label(2297, 1409, '·', 0, 'axis', 'start', note);
label(2308, 1409, 't.me/shepherdfxtradingtools', 149.500, 'axis', 'start', note);
el('circle', { cx: 2347, cy: 943.300, r: 11.500, fill: '#120d14', stroke: '#b267c2', 'stroke-width': 1.500 });
el('path', { d: 'M2349 937L2342.500 944H2346L2344.500 950L2351.500 942.500H2348z', fill: '#b267c2' });

// ---- crosshair ----
const cross = { fill: 'none', stroke: '#858585', 'stroke-width': 1, 'stroke-dasharray': '4 4' };
el('path', Object.assign({ d: 'M65 381.500H2447' }, cross));
el('path', Object.assign({ d: 'M1291.500 51V1426' }, cross));
el('rect', { x: 2447.500, y: 369, width: 25, height: 25, rx: 2, fill: '#3b3b3b' });
el('circle', { cx: 2460, cy: 381.500, r: 8.700, fill: 'none', stroke: '#d0d0d0', 'stroke-width': 1.200 });
el('path', { d: 'M2460 376.500V386.500M2455 381.500H2465', stroke: '#d0d0d0', 'stroke-width': 1.200 });
el('rect', { x: 2474, y: 369, width: 75.500, height: 25, rx: 2, fill: '#3b3b3b' });
label(2483, 386, '4,058.535', 61, 'axis strong');
el('rect', { x: 2473, y: 563, width: 76.500, height: 20, rx: 1.500, fill: '#4f9d8b' });
label(2483, 577.500, '4,017.315', 61, 'axis strong');
el('rect', { x: 2473, y: 1144, width: 50.500, height: 79, fill: GREEN });
[['0.204', 1155], ['0.204', 1175], ['0.084', 1194], ['0.060', 1214]].forEach(([t, y]) => label(2483, y + 4.500, t, 34, 'axis dark'));
el('rect', { x: 2473, y: 1223, width: 50.500, height: 20, fill: '#000' });
label(2483, 1238, '0.000', 34, 'axis strong');
el('rect', { x: 1213, y: 1426.500, width: 154.500, height: 27.500, rx: 2, fill: '#3b3b3b' });
label(1223, 1448, 'Wed 15 Jul \'26', 88, 'axis strong');
label(1323.500, 1448, '19:30', 34.500, 'axis strong');
el('path', { d: 'M2510.500 1435.500H2518.500L2523 1443L2518.500 1450.500H2510.500L2506 1443z', fill: 'none', stroke: '#c4c4c4', 'stroke-width': 1.500 });
el('circle', { cx: 2514.500, cy: 1443, r: 2.800, fill: 'none', stroke: '#c4c4c4', 'stroke-width': 1.500 });
```
